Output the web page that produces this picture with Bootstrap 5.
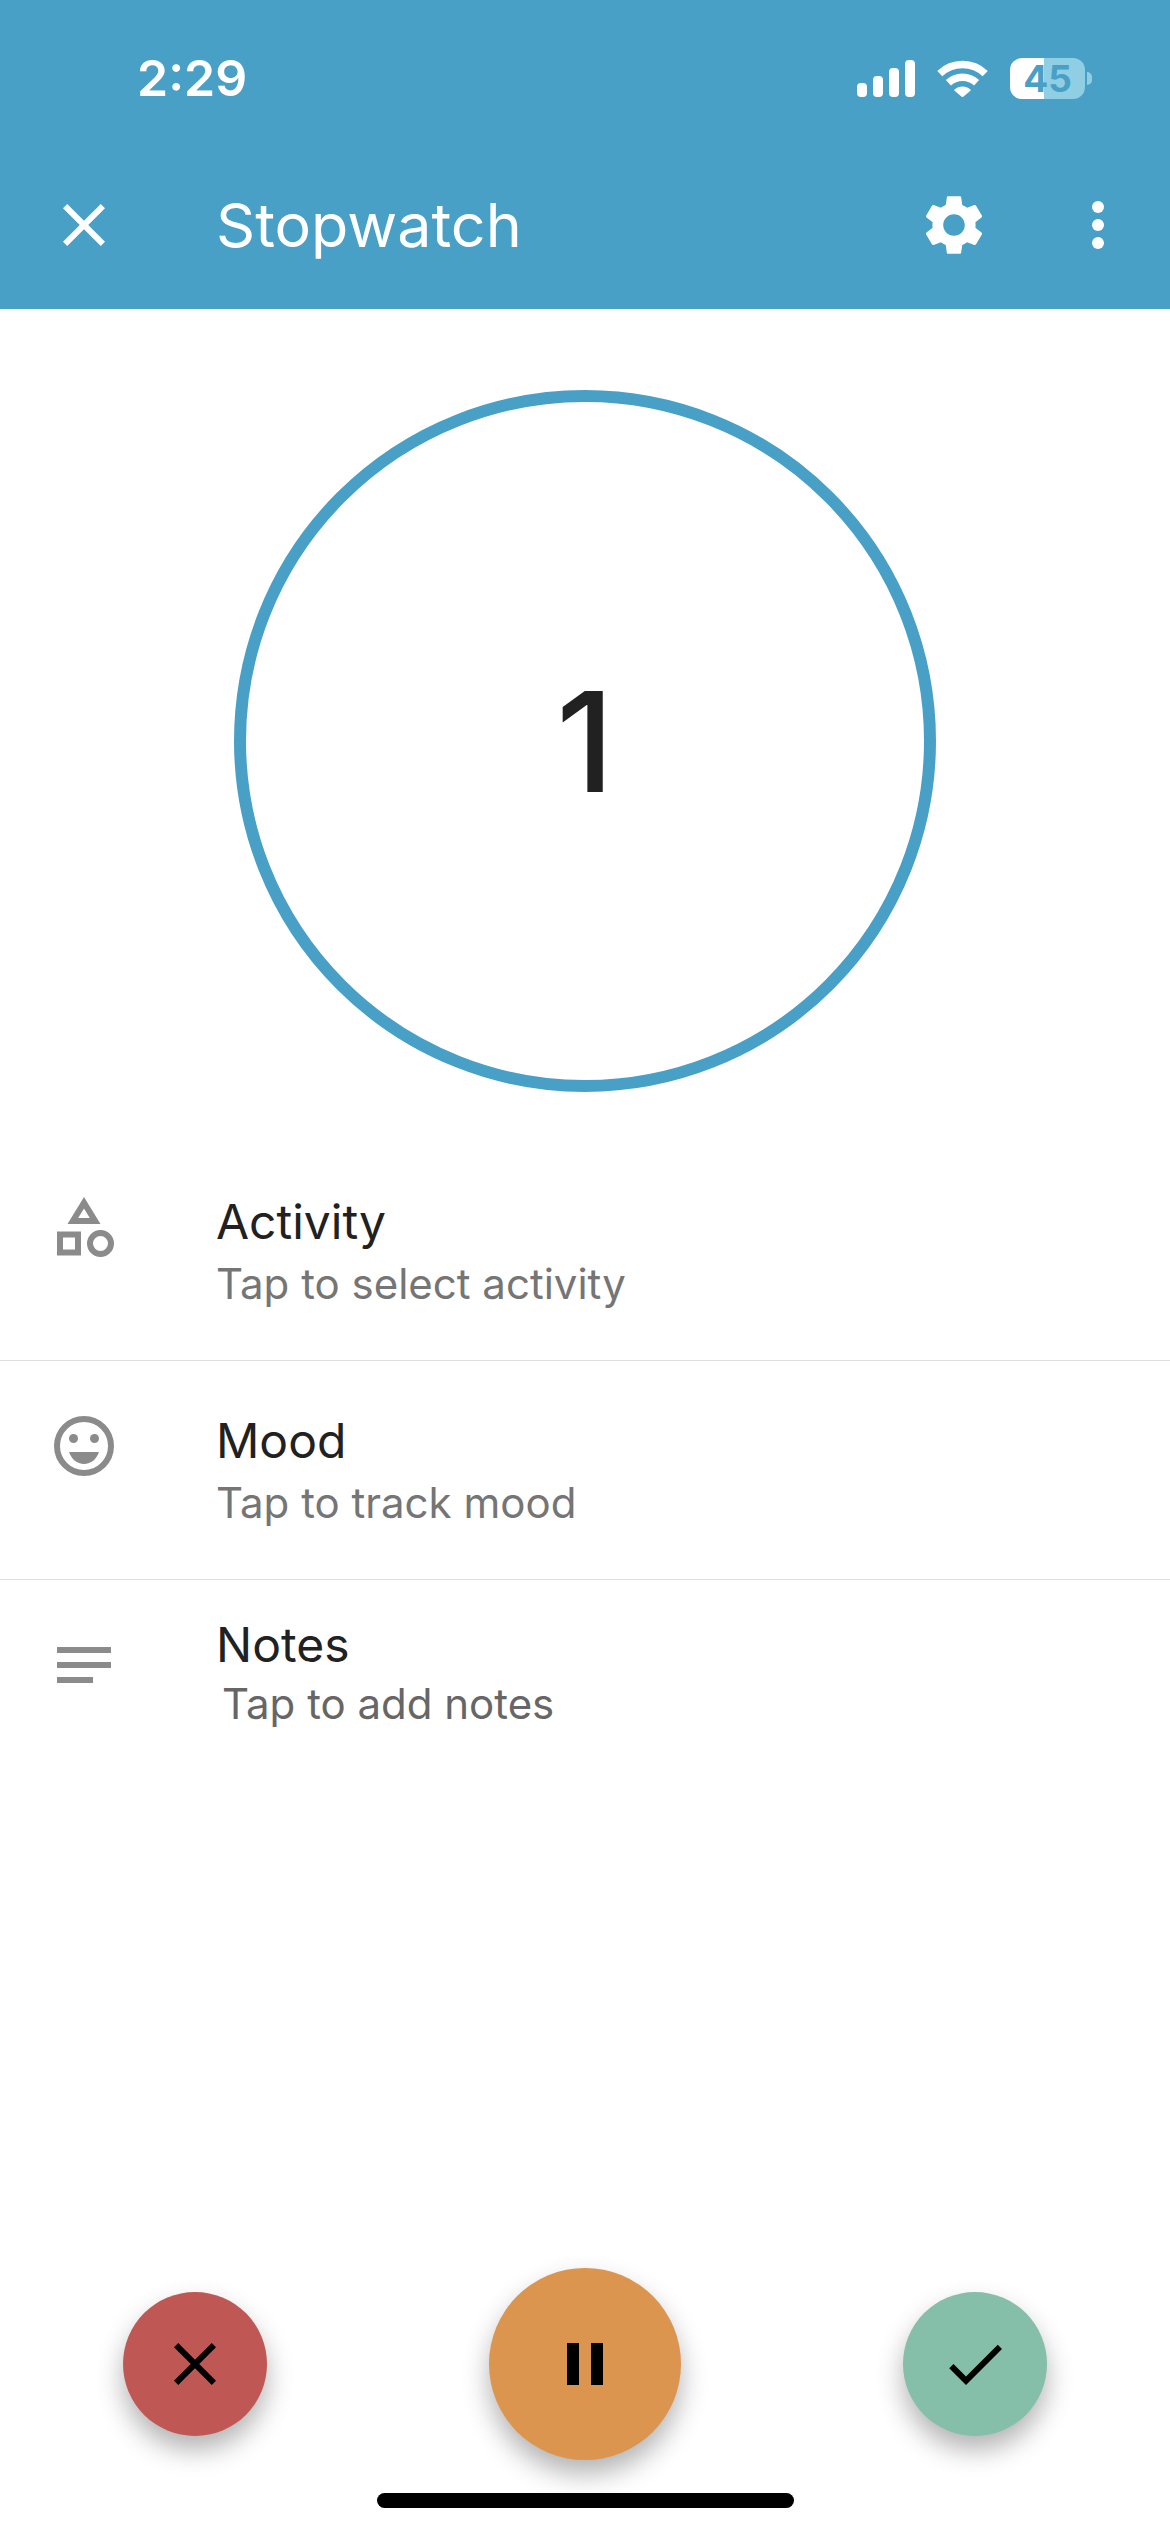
<!DOCTYPE html>
<html lang="en">
<head>
<meta charset="utf-8">
<meta name="viewport" content="width=device-width, initial-scale=1">
<title>Stopwatch</title>
<link href="https://cdn.jsdelivr.net/npm/bootstrap@5.3.0/dist/css/bootstrap.min.css" rel="stylesheet">
<style>
  :root { --brand: #48a0c7; --ink: #212121; --muted: #757575; --glyph: #8b8b8b; }
  body { font-family: Inter, Roboto, sans-serif; color: var(--ink); background: #fff; }
  .icon { width: 72px; height: 72px; fill: currentColor; display: block; flex: none; }
  .plain { background: none; border: 0; padding: 0; color: inherit; text-align: left; }

  .app-header { background: var(--brand); color: #fff; }
  .status { height: 141px; padding: 15px 78px 0 137px; }
  .clock { font-size: 50px; font-weight: 600; line-height: 60px; }
  .status-icons { gap: 22px; }
  .battery { width: 75px; height: 41px; border-radius: 12px; color: var(--brand);
    background: linear-gradient(90deg, #fff 45%, #90cfe3 45%); font-size: 37px; font-weight: 700; line-height: 41px; }
  .battery-tip { width: 5px; height: 13px; margin-left: 2px; border-radius: 0 6px 6px 0; background: #90cfe3; }

  .toolbar { height: 168px; padding: 0 36px 0 48px; }
  .toolbar h1 { font-size: 61px; font-weight: 400; line-height: 72px; }
  .lead-gap { gap: 96px; }
  .tool-gap { gap: 72px; }

  .dial { width: 60%; aspect-ratio: 1; margin: 81px auto 50px; border: 12px solid var(--brand); }
  .dial-value { font-size: 139px; font-weight: 500; line-height: 1; }

  .entry { height: 219px; padding: 0 48px; border-bottom: 1px solid #dedede; }
  .entry .icon { margin-top: 49px; color: var(--glyph); }
  .entry-text { padding-top: 49px; }
  .entry-title { font-size: 48px; line-height: 62px; display: block; }
  .entry-hint { font-size: 42px; line-height: 62px; display: block; color: var(--muted); }
  .notes { border-bottom: 0; }
  .notes .entry-text { padding-top: 34px; }
  .notes input { font-size: 42px; height: 56px; line-height: 56px; padding: 0 6px; border: 0; outline: 0; width: 100%; }
  .notes input::placeholder { color: #666; opacity: 1; }

  .fab { width: 144px; height: 144px; border: 0; padding: 0; color: #000; box-shadow: 0 14px 27px rgba(0,0,0,.3); }
  .fab-main { width: 192px; height: 192px; }
  .fab-discard { background: #bf5855; }
  .fab-pause { background: #dc954f; }
  .fab-save { background: #85bea9; }
  .home-bar { width: 417px; height: 15px; margin: 33px auto 24px; background: #000; position: relative; }
</style>
<script src="https://cdn.jsdelivr.net/npm/bootstrap@5.3.0/dist/js/bootstrap.bundle.min.js"></script>
</head>
<body class="d-flex flex-column min-vh-100">
<header class="app-header">
  <div class="status d-flex align-items-center justify-content-between">
    <span class="clock">2:29</span>
    <div class="status-icons d-flex align-items-center">
      <svg width="58" height="37" viewBox="0 0 58 37" fill="#fff" aria-label="Signal"><rect y="23" width="10" height="14" rx="4"/><rect x="16" y="16" width="10" height="21" rx="4"/><rect x="32" y="8" width="10" height="29" rx="4"/><rect x="48" width="10" height="37" rx="4"/></svg>
      <svg width="51" height="37" viewBox="0 0 51 37" aria-label="Wi-Fi"><g fill="none" stroke="#fff" stroke-width="7.4"><path d="M2.8 13.6a33 33 0 0 1 45.4 0"/><path d="M11.4 22.8a20.5 20.5 0 0 1 28.2 0"/></g><path fill="#fff" d="M17.6 29.6a11.4 11.4 0 0 1 15.8 0q.6.6 0 1.2l-7.1 5.9q-.8.6-1.6 0l-7.1-5.9q-.6-.6 0-1.2z"/></svg>
      <div class="d-flex align-items-center">
        <div class="battery text-center">45</div>
        <div class="battery-tip"></div>
      </div>
    </div>
  </div>
  <nav class="toolbar d-flex align-items-center justify-content-between" aria-label="Stopwatch">
    <div class="d-flex align-items-center lead-gap">
      <button class="plain" type="button" aria-label="Close"><svg class="icon" viewBox="0 0 24 24"><path d="M19 6.41 17.59 5 12 10.59 6.41 5 5 6.41 10.59 12 5 17.59 6.41 19 12 13.41 17.59 19 19 17.59 13.41 12z"/></svg></button>
      <h1 class="m-0">Stopwatch</h1>
    </div>
    <div class="d-flex align-items-center tool-gap">
      <button class="plain" type="button" aria-label="Settings"><svg class="icon" viewBox="0 0 24 24"><path d="M19.14 12.94c.04-.3.06-.61.06-.94 0-.32-.02-.64-.07-.94l2.03-1.58c.18-.14.23-.41.12-.61l-1.92-3.32c-.12-.22-.37-.29-.59-.22l-2.39.96c-.5-.38-1.03-.7-1.62-.94l-.36-2.54c-.04-.24-.24-.41-.48-.41h-3.84c-.24 0-.43.17-.47.41l-.36 2.54c-.59.24-1.13.57-1.62.94l-2.39-.96c-.22-.08-.47 0-.59.22L2.74 8.87c-.12.21-.08.47.12.61l2.03 1.58c-.05.3-.09.63-.09.94s.02.64.07.94l-2.03 1.58c-.18.14-.23.41-.12.61l1.92 3.32c.12.22.37.29.59.22l2.39-.96c.5.38 1.03.7 1.62.94l.36 2.54c.05.24.24.41.48.41h3.84c.24 0 .44-.17.47-.41l.36-2.54c.59-.24 1.13-.56 1.62-.94l2.39.96c.22.08.47 0 .59-.22l1.92-3.32c.12-.22.07-.47-.12-.61l-2.01-1.58zM12 15.6c-1.98 0-3.6-1.62-3.6-3.6s1.62-3.6 3.6-3.6 3.6 1.62 3.6 3.6-1.62 3.6-3.6 3.6z"/></svg></button>
      <button class="plain" type="button" aria-label="More options"><svg class="icon" viewBox="0 0 24 24"><circle cx="12" cy="6" r="2"/><circle cx="12" cy="12" r="2"/><circle cx="12" cy="18" r="2"/></svg></button>
    </div>
  </nav>
</header>

<main>
  <div class="dial rounded-circle d-flex align-items-center justify-content-center" role="timer"><span class="dial-value">1</span></div>

  <button class="plain entry w-100 d-flex align-items-start lead-gap" type="button">
    <svg class="icon" viewBox="0 0 24 24"><path d="m12 2-5.5 9h11L12 2zm0 3.84L13.93 9h-3.87L12 5.84zM17.5 13a4.5 4.5 0 1 0 0 9 4.5 4.5 0 0 0 0-9zm0 7a2.5 2.5 0 1 1 0-5 2.5 2.5 0 0 1 0 5zM3 21.5h8v-8H3v8zm2-6h4v4H5v-4z"/></svg>
    <span class="entry-text"><span class="entry-title">Activity</span><span class="entry-hint">Tap to select activity</span></span>
  </button>
  <button class="plain entry w-100 d-flex align-items-start lead-gap" type="button">
    <svg class="icon" viewBox="0 0 24 24"><circle cx="12" cy="12" r="9" fill="none" stroke="currentColor" stroke-width="2"/><circle cx="8.5" cy="9.5" r="1.5"/><circle cx="15.5" cy="9.5" r="1.5"/><path d="M12 18c2.28 0 4.22-1.66 5-4H7c.78 2.34 2.72 4 5 4z"/></svg>
    <span class="entry-text"><span class="entry-title">Mood</span><span class="entry-hint">Tap to track mood</span></span>
  </button>
  <div class="entry notes d-flex align-items-start lead-gap">
    <svg class="icon" viewBox="0 0 24 24"><path d="M3 6h18v2H3zM3 11h18v2H3zM3 16h12v2H3z"/></svg>
    <div class="entry-text flex-grow-1">
      <label class="entry-title" for="notes">Notes</label>
      <input id="notes" class="d-block" type="text" placeholder="Tap to add notes">
    </div>
  </div>
</main>

<footer class="mt-auto">
  <div class="row g-0 align-items-center">
    <div class="col-4 d-flex justify-content-center"><button class="fab fab-discard rounded-circle d-flex align-items-center justify-content-center" type="button" aria-label="Discard"><svg class="icon" viewBox="0 0 24 24"><path d="M19 6.41 17.59 5 12 10.59 6.41 5 5 6.41 10.59 12 5 17.59 6.41 19 12 13.41 17.59 19 19 17.59 13.41 12z"/></svg></button></div>
    <div class="col-4 d-flex justify-content-center"><button class="fab fab-main fab-pause rounded-circle d-flex align-items-center justify-content-center" type="button" aria-label="Pause"><svg class="icon" viewBox="0 0 24 24"><path d="M6 19h4V5H6zM14 5v14h4V5z"/></svg></button></div>
    <div class="col-4 d-flex justify-content-center"><button class="fab fab-save rounded-circle d-flex align-items-center justify-content-center" type="button" aria-label="Save"><svg class="icon" viewBox="0 0 24 24"><path d="M9 16.17 4.83 12l-1.42 1.41L9 19 21 7 19.59 5.59z"/></svg></button></div>
  </div>
  <div class="home-bar rounded-pill"></div>
</footer>
</body>
</html>
